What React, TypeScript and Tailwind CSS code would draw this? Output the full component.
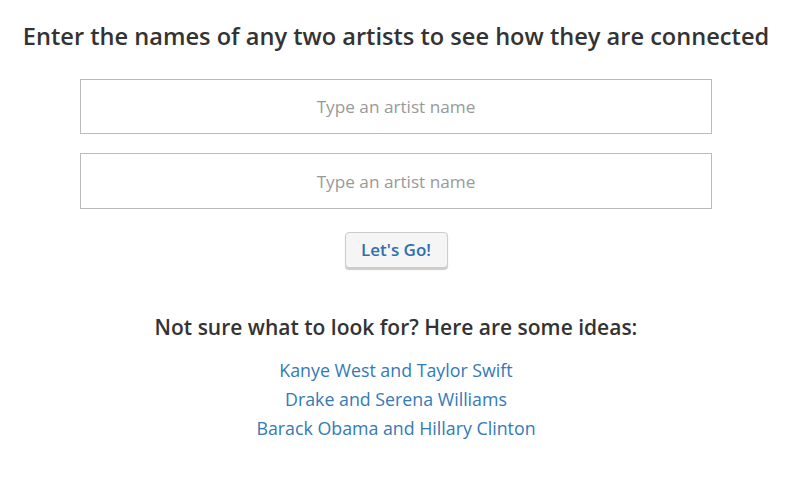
import React from 'react';

const IDEAS = [
  'Kanye West and Taylor Swift',
  'Drake and Serena Williams',
  'Barack Obama and Hillary Clinton',
];

export default function App() {
  return (
    <div
      className="min-h-[478px] w-[792px] bg-white text-[#333]"
      style={{ fontFamily: '"Open Sans", "Liberation Sans", sans-serif' }}
    >
      <h1 className="pt-[19px] text-center text-[23.6px] font-semibold leading-[34px] text-[#333]">
        Enter the names of any two artists to see how they are connected
      </h1>

      <div className="mx-auto mt-[26px] flex w-[632px] flex-col gap-[19px]">
        <input
          type="text"
          placeholder="Type an artist name"
          className="h-[55px] w-full border border-[#bbb] bg-white text-center text-[17.2px] text-[#555] outline-none placeholder:text-[#999]"
        />
        <input
          type="text"
          placeholder="Type an artist name"
          className="h-[56px] w-full border border-[#bbb] bg-white text-center text-[17.2px] text-[#555] outline-none placeholder:text-[#999]"
        />
      </div>

      <div className="mt-[23px] flex justify-center">
        <button className="h-[36px] w-[103px] rounded-[4px] border border-[#ccc] bg-[#f5f5f5] text-[17px] font-semibold text-[#2f6fad] shadow-[0_2px_1px_rgba(0,0,0,0.2)]">
          Let's Go!
        </button>
      </div>

      <h2 className="mt-[44px] text-center text-[21px] font-semibold leading-[31px] text-[#333]">
        Not sure what to look for? Here are some ideas:
      </h2>

      <div className="mt-[13px] flex flex-col items-center">
        {IDEAS.map((idea) => (
          <a key={idea} href="#" className="text-[17.8px] leading-[29px] text-[#337ab7]">
            {idea}
          </a>
        ))}
      </div>
    </div>
  );
}
